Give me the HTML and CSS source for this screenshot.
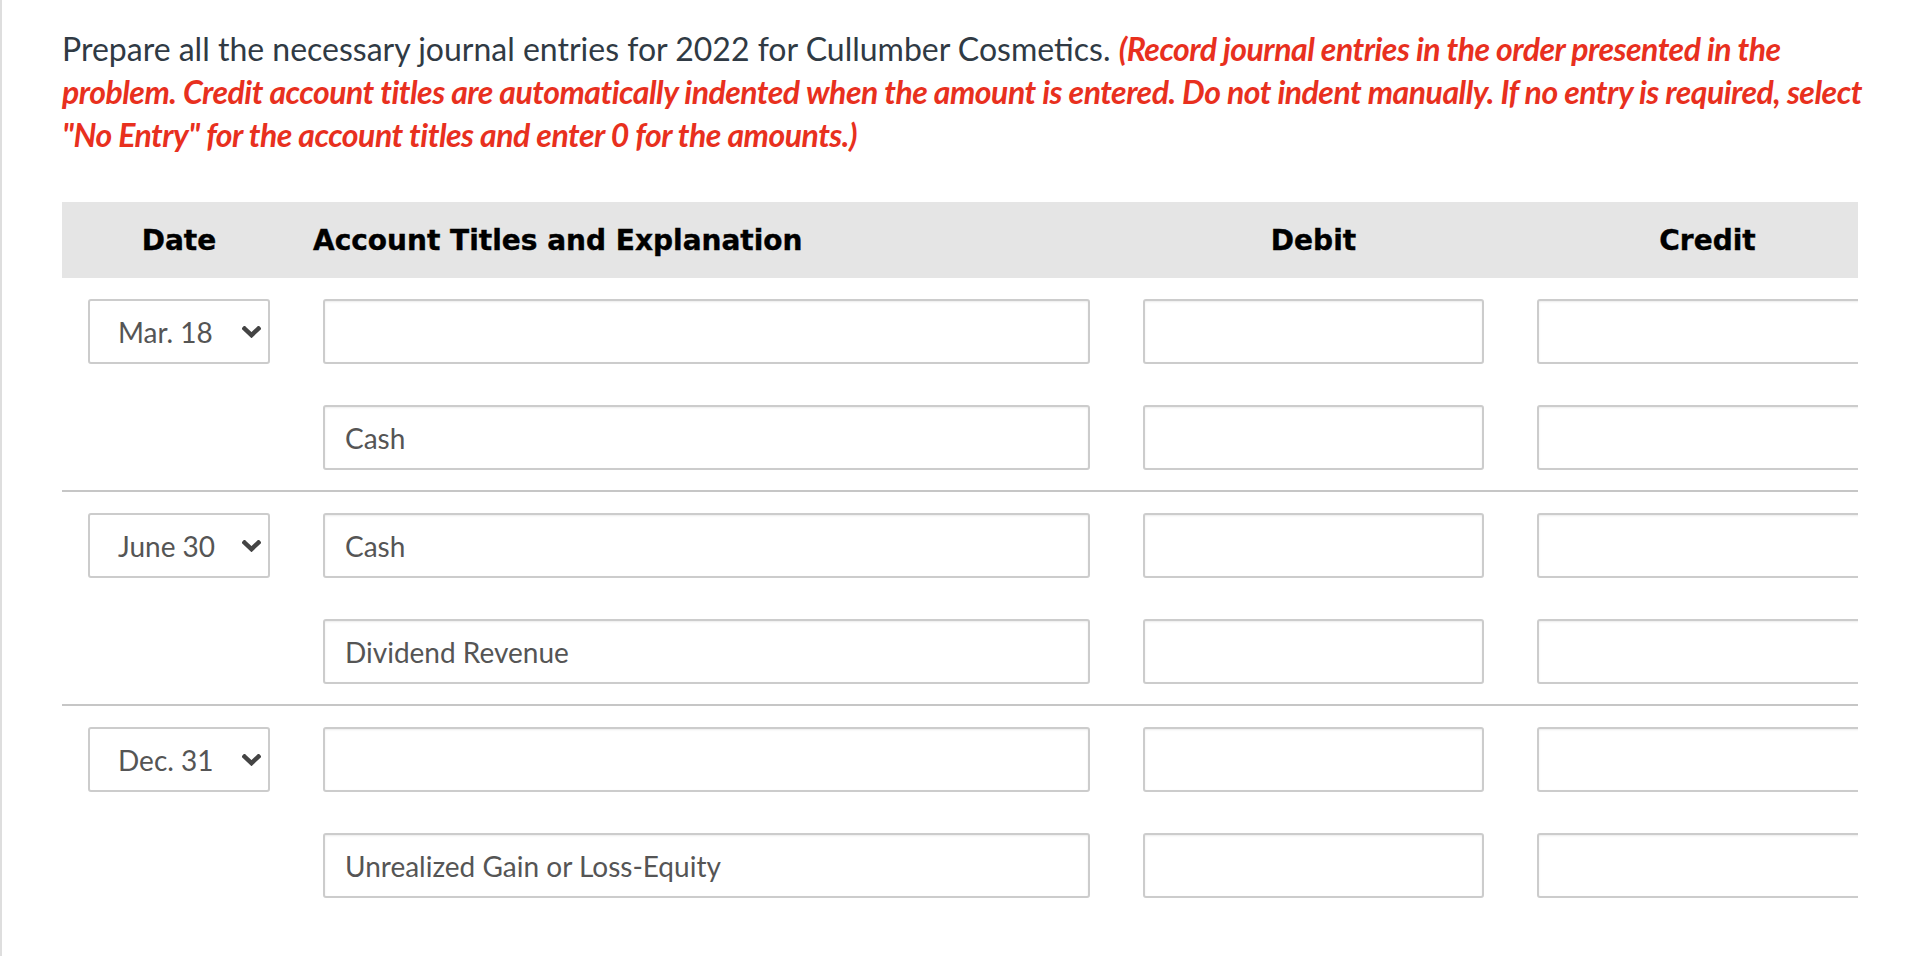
FILE: index.html
```html
<!DOCTYPE html>
<html lang="en">
<head>
<meta charset="utf-8">
<title>Journal entries</title>
<link rel="stylesheet" href="styles.css">
</head>
<body>
<div class="page">
  <p class="prompt">Prepare all the necessary journal entries for 2022 for Cullumber Cosmetics. <em class="note">(Record journal entries in the order presented in the problem. Credit account titles are automatically indented when the amount is entered. Do not indent manually. If no entry is required, select "No Entry" for the account titles and enter 0 for the amounts.)</em></p>

  <div class="journal">
    <div class="head">
      <div class="hcell center">Date</div>
      <div class="hcell acct">Account Titles and Explanation</div>
      <div class="hcell center">Debit</div>
      <div class="hcell center">Credit</div>
    </div>

    <div class="group">
      <div class="row">
        <div class="select"><span>Mar. 18</span><svg class="chev" viewBox="0 0 19 12" width="19" height="12"><polyline points="2.5,2.5 9.5,9.2 16.5,2.5"/></svg></div>
        <input class="field" type="text" value="">
        <input class="field" type="text" value="">
        <input class="field" type="text" value="">
      </div>
      <div class="row">
        <div class="blank"></div>
        <input class="field" type="text" value="Cash">
        <input class="field" type="text" value="">
        <input class="field" type="text" value="">
      </div>
    </div>

    <div class="group">
      <div class="row">
        <div class="select"><span>June 30</span><svg class="chev" viewBox="0 0 19 12" width="19" height="12"><polyline points="2.5,2.5 9.5,9.2 16.5,2.5"/></svg></div>
        <input class="field" type="text" value="Cash">
        <input class="field" type="text" value="">
        <input class="field" type="text" value="">
      </div>
      <div class="row">
        <div class="blank"></div>
        <input class="field" type="text" value="Dividend Revenue">
        <input class="field" type="text" value="">
        <input class="field" type="text" value="">
      </div>
    </div>

    <div class="group last">
      <div class="row">
        <div class="select"><span>Dec. 31</span><svg class="chev" viewBox="0 0 19 12" width="19" height="12"><polyline points="2.5,2.5 9.5,9.2 16.5,2.5"/></svg></div>
        <input class="field" type="text" value="">
        <input class="field" type="text" value="">
        <input class="field" type="text" value="">
      </div>
      <div class="row">
        <div class="blank"></div>
        <input class="field" type="text" value="Unrealized Gain or Loss-Equity">
        <input class="field" type="text" value="">
        <input class="field" type="text" value="">
      </div>
    </div>
  </div>
</div>
</body>
</html>
```

FILE: styles.css
```css
html, body {
  margin: 0;
  padding: 0;
  background: #ffffff;
}

.page {
  min-height: 956px;
  box-sizing: border-box;
  border-left: 2px solid #dedede;
  padding: 27px 40px 0 60px;
  font-family: Lato, "Open Sans", "Liberation Sans", sans-serif;
}

.prompt {
  margin: 0;
  width: 1806px;
  font-size: 32px;
  line-height: 43px;
  color: #303a44;
}

.note {
  font-style: italic;
  font-weight: 700;
  color: #e8301e;
  letter-spacing: -0.5px;
}

.journal {
  width: 1796px;
  margin-top: 46px;
  overflow: hidden;
}

.head,
.row {
  display: grid;
  grid-template-columns: 182px 767px 341px 341px;
  column-gap: 53px;
  padding-left: 26px;
  width: 1850px;
}

.head {
  height: 76px;
  align-items: center;
  background: #e5e5e5;
  font-family: "DejaVu Sans", Verdana, sans-serif;
  font-weight: 700;
  font-size: 28px;
  color: #000000;
  -webkit-text-stroke: 0.4px #000000;
}

.hcell.center {
  text-align: center;
}

.hcell.acct {
  margin-left: -10px;
}

.group {
  padding: 21px 0 20px;
  border-bottom: 2px solid #c6c6c6;
  display: flex;
  flex-direction: column;
  row-gap: 41px;
}

.group.last {
  border-bottom: none;
}

.select,
.field {
  box-sizing: border-box;
  height: 65px;
  border: 2px solid #cccccc;
  border-radius: 3px;
  background: #ffffff;
  font-family: Lato, "Open Sans", "Liberation Sans", sans-serif;
  font-size: 28px;
  color: #555555;
}

.field {
  width: 100%;
  margin: 0;
  padding: 0 20px;
  box-shadow: inset 0 1px 2px rgba(0, 0, 0, 0.08);
  outline: none;
}

.select {
  display: flex;
  align-items: center;
  justify-content: space-between;
  padding: 0 7px 0 28px;
}

.chev {
  display: block;
}

.chev polyline {
  fill: none;
  stroke: #444444;
  stroke-width: 4.4;
  stroke-linecap: square;
  stroke-linejoin: miter;
}
```
